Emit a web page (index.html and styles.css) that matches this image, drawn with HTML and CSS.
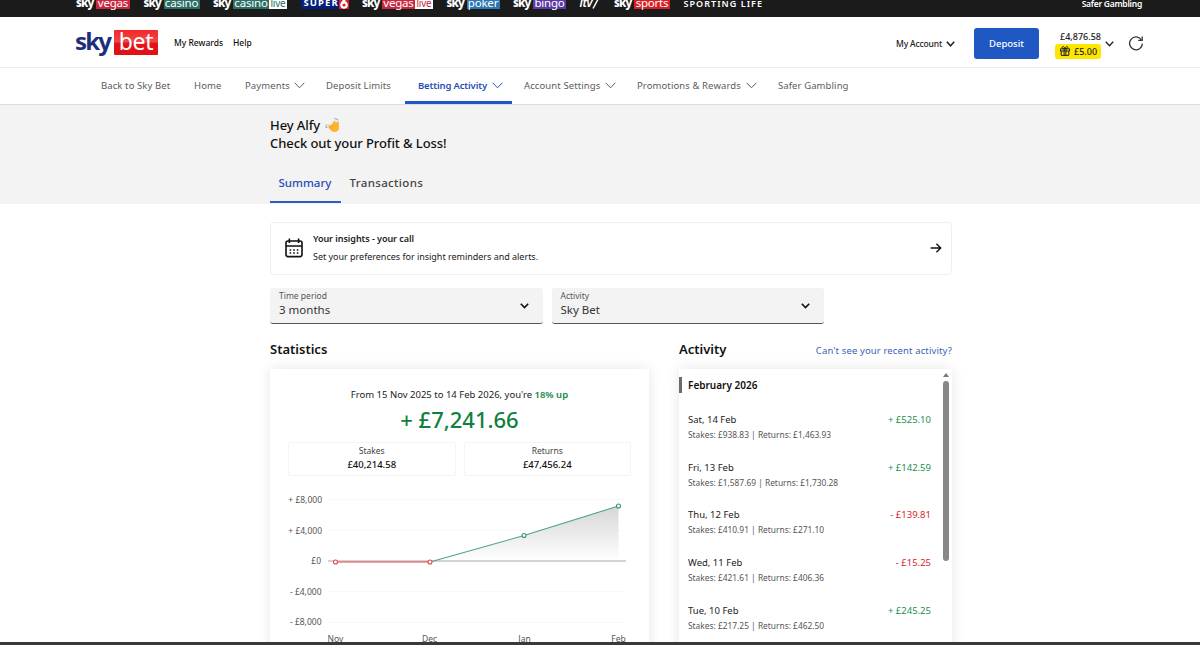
FILE: index.html
```html
<!DOCTYPE html>
<html lang="en">
<head>
  <meta charset="UTF-8">
  <title>Sky Bet - Profit &amp; Loss</title>
  <link rel="stylesheet" href="styles.css">
</head>
<body>

<!-- Product bar -->
<div class="topbar">
  <div class="products">
    <a class="brand w-vegas"><b>sky</b><span class="tag vegas">vegas</span></a>
    <a class="brand w-casino"><b>sky</b><span class="tag casino">casino</span></a>
    <a class="brand w-casino-live"><b>sky</b><span class="tag casino">casino</span><span class="tag live live-green">live</span></a>
    <a class="brand w-super"><span class="super">SUPER</span><span class="six"><svg width="10" height="15" viewBox="0 0 10 15"><path d="M6.4 4.5 L3 9.5" stroke="#fff" stroke-width="2.6"/><circle cx="5" cy="11" r="2.7" fill="none" stroke="#fff" stroke-width="2.2"/></svg></span></a>
    <a class="brand w-vegas-live"><b>sky</b><span class="tag vegas">vegas</span><span class="tag live live-red">live</span></a>
    <a class="brand w-poker"><b>sky</b><span class="tag poker">poker</span></a>
    <a class="brand w-bingo"><b>sky</b><span class="tag bingo">bingo</span></a>
    <a class="brand w-itv"><i>itv</i><svg width="7" height="15" viewBox="0 0 7 15"><path d="M6.2 5 L1 14.5" fill="none" stroke="#fff" stroke-width="1.5"/></svg></a>
    <a class="brand w-sports"><b>sky</b><span class="tag sports">sports</span></a>
    <a class="brand sporting">SPORTING LIFE</a>
  </div>
  <a class="safer">Safer Gambling</a>
</div>

<header>
  <a class="logo"><b>sky</b><span>bet</span></a>
  <a class="head-link rewards">My Rewards</a>
  <a class="head-link">Help</a>
  <div class="account">
    <a class="my-account">My Account</a>
    <svg class="acc-chevron" width="9" height="6" viewBox="0 0 9 6"><path d="M.8 .8 L4.5 4.8 L8.2 .8" fill="none" stroke="#222" stroke-width="1.5"/></svg>
    <button class="deposit">Deposit</button>
    <div class="balance">
      <span class="cash">£4,876.58</span>
      <span class="bonus">
        <svg width="10" height="10" viewBox="0 0 10 10" fill="none" stroke="#222" stroke-width="1"><path d="M.5 2.8 H9.5 V5 H.5 Z M1.2 5 V9.4 H8.8 V5 M4.1 2.8 V9.4 M5.9 2.8 V9.4 M5 2.6 C4.4 .2 2 0 2.2 1.7 C2.3 2.5 3.4 2.7 5 2.7 C6.6 2.7 7.7 2.5 7.8 1.7 C8 0 5.6 .2 5 2.6"/></svg>
        £5.00
      </span>
    </div>
    <svg class="bal-chevron" width="9" height="6" viewBox="0 0 9 6"><path d="M.8 .8 L4.5 4.8 L8.2 .8" fill="none" stroke="#222" stroke-width="1.3"/></svg>
    <svg class="refresh" width="16" height="16" viewBox="0 0 16 16" fill="none" stroke="#333" stroke-width="1.3"><path d="M13.4 4.9 A6.4 6.4 0 1 0 14.4 8.6"/><path d="M14.2 1.4 V5.4 H10.2"/></svg>
  </div>
</header>

<nav>
  <a class="n-back">Back to Sky Bet</a>
  <a class="n-home">Home</a>
  <a class="n-pay">Payments <svg width="11" height="7" viewBox="0 0 11 7"><path d="M.7 .8 L5.5 5.8 L10.3 .8"/></svg></a>
  <a class="n-limits">Deposit Limits</a>
  <a class="n-activity active">Betting Activity <svg width="11" height="7" viewBox="0 0 11 7"><path d="M.7 .8 L5.5 5.8 L10.3 .8"/></svg></a>
  <a class="n-settings">Account Settings <svg width="11" height="7" viewBox="0 0 11 7"><path d="M.7 .8 L5.5 5.8 L10.3 .8"/></svg></a>
  <a class="n-promo">Promotions &amp; Rewards <svg width="11" height="7" viewBox="0 0 11 7"><path d="M.7 .8 L5.5 5.8 L10.3 .8"/></svg></a>
  <a class="n-safer">Safer Gambling</a>
</nav>

<section class="hero">
  <div class="container">
    <h1>Hey Alfy <svg width="15" height="15" viewBox="0 0 15 15"><path d="M6.6 6.4 L8.6 3.4 C9.8 2.2 10.8 3 10.6 4.2 L10.4 5 L12.4 3.6 C13.6 3 14 4 13.8 5 L14 9.6 C14 12.4 12.4 14.2 9.4 14 C7.6 13.9 6.3 12.8 4.6 11 L3.4 9.7 C3 8.8 3.8 8.3 4.6 8.8 L3.3 7.5 C3.2 6.6 4 6.3 4.8 6.9 L5.6 7.6 Z" fill="#fbb62f"/><path d="M5 8.8 L7.6 10.8 M6 7.5 L8.6 9.6" stroke="#f09a28" stroke-width=".7"/><path d="M9.4 .9 C11.2 .6 12.6 1 13.2 2.4 M.2 8.4 C1 9.2 1.5 9.4 2.4 9.6 M1 6.6 L2.2 7.6" fill="none" stroke="#6fb0dc" stroke-width="1.1"/></svg><br>Check out your Profit &amp; Loss!</h1>
    <div class="tabs">
      <a class="tab selected">Summary</a>
      <a class="tab">Transactions</a>
    </div>
  </div>
</section>

<main class="container">
  <div class="insights">
    <svg width="18" height="20" viewBox="0 0 18 20" fill="none" stroke="#111" stroke-width="1.6"><rect x="1" y="3" width="16" height="15.6" rx="2"/><path d="M1 8 H17 M4.4 .6 V5 M13.6 .6 V5"/><path d="M4.6 12 H6.2 M8.2 12 H9.8 M11.8 12 H13.4 M4.6 15 H6.2 M8.2 15 H9.8 M11.8 15 H13.4" stroke-width="1.5"/></svg>
    <div class="insights-text">
      <strong>Your insights - your call</strong>
      <p>Set your preferences for insight reminders and alerts.</p>
    </div>
    <svg width="12" height="10" viewBox="0 0 12 10" fill="none" stroke="#111" stroke-width="1.4"><path d="M.6 5 H10.6 M6.4 .8 L10.7 5 L6.4 9.2"/></svg>
  </div>

  <div class="filters">
    <div class="select">
      <div><label>Time period</label><span class="value">3 months</span></div>
      <svg width="9" height="6" viewBox="0 0 9 6"><path d="M.8 .8 L4.5 4.5 L8.2 .8"/></svg>
    </div>
    <div class="select">
      <div><label>Activity</label><span class="value">Sky Bet</span></div>
      <svg width="9" height="6" viewBox="0 0 9 6"><path d="M.8 .8 L4.5 4.5 L8.2 .8"/></svg>
    </div>
  </div>

  <div class="columns">
    <section class="stats">
      <h2>Statistics</h2>
      <div class="card stats-card">
        <p class="period">From 15 Nov 2025 to 14 Feb 2026, you're <b>18% up</b></p>
        <p class="total">+ £7,241.66</p>
        <div class="boxes">
          <div class="box"><span>Stakes</span><b>£40,214.58</b></div>
          <div class="box"><span>Returns</span><b>£47,456.24</b></div>
        </div>
        <svg class="chart" width="343" height="160" viewBox="0 0 343 160">
          <defs>
            <linearGradient id="fade" x1="0" y1="0" x2="0" y2="1">
              <stop offset="0" stop-color="#d6d6d6"/>
              <stop offset="1" stop-color="#fff"/>
            </linearGradient>
          </defs>
          <g stroke="#f9f9f9">
            <path d="M40 15.5 H338 M40 46.5 H338 M40 107.5 H338 M40 138.5 H338"/>
          </g>
          <path d="M142 77 L236 51.5 L330.5 22 V77 Z" fill="url(#fade)"/>
          <path d="M40 77 H338" stroke="#c4c4c4" stroke-width="1.4"/>
          <path d="M142 78 L236 51.5 L330.5 22" fill="none" stroke="#4aa77c" stroke-width="1.1"/>
          <path d="M47.5 78 H142" stroke="#e5474a" stroke-width="1.2"/>
          <g fill="#fff" stroke-width="1.1">
            <circle cx="47.5" cy="78" r="2" stroke="#e5474a"/>
            <circle cx="142" cy="78" r="2" stroke="#e5474a"/>
            <circle cx="236" cy="51.5" r="2" stroke="#2f9a68"/>
            <circle cx="330.5" cy="22" r="2" stroke="#2f9a68"/>
          </g>
          <g class="axis" text-anchor="end">
            <text x="34" y="18.7">+ £8,000</text>
            <text x="34" y="49.5">+ £4,000</text>
            <text x="33" y="80">£0</text>
            <text x="33.5" y="110.7">- £4,000</text>
            <text x="33.5" y="141.2">- £8,000</text>
          </g>
          <g class="axis" text-anchor="middle">
            <text x="47.5" y="157.5">Nov</text>
            <text x="141.5" y="157.5">Dec</text>
            <text x="236.5" y="157.5">Jan</text>
            <text x="330.5" y="157.5">Feb</text>
          </g>
        </svg>
      </div>
    </section>

    <section class="activity">
      <div class="activity-head">
        <h2>Activity</h2>
        <a>Can't see your recent activity?</a>
      </div>
      <div class="card activity-card">
        <div class="list">
          <h3>February 2026</h3>
          <div class="day"><div class="row"><span>Sat, 14 Feb</span><span class="win">+ £525.10</span></div><p>Stakes: £938.83 | Returns: £1,463.93</p></div>
          <div class="day"><div class="row"><span>Fri, 13 Feb</span><span class="win">+ £142.59</span></div><p>Stakes: £1,587.69 | Returns: £1,730.28</p></div>
          <div class="day"><div class="row"><span>Thu, 12 Feb</span><span class="loss">- £139.81</span></div><p>Stakes: £410.91 | Returns: £271.10</p></div>
          <div class="day"><div class="row"><span>Wed, 11 Feb</span><span class="loss">- £15.25</span></div><p>Stakes: £421.61 | Returns: £406.36</p></div>
          <div class="day"><div class="row"><span>Tue, 10 Feb</span><span class="win">+ £245.25</span></div><p>Stakes: £217.25 | Returns: £462.50</p></div>
        </div>
        <div class="scroll">
          <div class="arrow"></div>
          <div class="thumb"></div>
        </div>
      </div>
    </section>
  </div>
</main>

<footer></footer>

</body>
</html>
```
FILE: styles.css
```css
* {
  box-sizing: border-box;
}

body {
  margin: 0;
  height: 645px;
  overflow: hidden;
  display: flex;
  flex-direction: column;
  font-family: 'Noto Sans', sans-serif;
  font-size: 10px;
  color: #222;
  background: #fff;
}

h1, h2, h3, p {
  margin: 0;
}

svg {
  flex: none;
}

/* Product bar */
.topbar {
  height: 17px;
  flex: none;
  overflow: hidden;
  background: #1b1b1b;
  color: #fff;
  display: flex;
  justify-content: space-between;
  align-items: flex-end;
  padding: 0 58px 8px 76px;
}

.products {
  display: flex;
  gap: 13.5px;
  align-items: flex-end;
}

.brand {
  display: flex;
  align-items: flex-end;
  height: 15px;
  font-size: 11.5px;
  line-height: 18px;
  white-space: nowrap;
}

.brand b {
  width: 20px;
  height: 15px;
  font-weight: 800;
  letter-spacing: -0.8px;
}

.brand i {
  height: 15px;
  font-size: 12px;
  font-weight: 600;
  letter-spacing: -0.5px;
}

.tag {
  flex: 1;
  height: 15px;
  text-align: center;
  letter-spacing: -0.2px;
}

.w-vegas { width: 54px; }
.w-casino { width: 56px; }
.w-casino-live { width: 74px; }
.w-super { width: 48px; }
.w-vegas-live { width: 71px; }
.w-poker { width: 53px; }
.w-bingo { width: 53px; }
.w-itv { width: 21px; }
.w-sports { width: 56px; }

.vegas { background: #c9283f; }
.casino { background: #2c6f66; }
.poker { background: #2d76b5; }
.bingo { background: #5c3aa5; }
.sports { background: #d81f26; }

.live {
  flex: none;
  width: 18px;
  background: #fff;
  font-size: 10px;
}

.live-green { color: #2c6f66; }
.live-red { color: #c9283f; }

.super {
  width: 38px;
  height: 15px;
  padding-left: 3px;
  background: #04207c;
  font-size: 9.5px;
  font-weight: 700;
  letter-spacing: 1.1px;
}

.six {
  width: 10px;
  height: 15px;
  background: #e01b22;
}

.sporting {
  align-items: flex-start;
  font-size: 9px;
  line-height: 19px;
  font-weight: 600;
  letter-spacing: 1.05px;
}

.safer {
  height: 12px;
  font-weight: 600;
  font-size: 8.5px;
  line-height: 13px;
  letter-spacing: -0.25px;
}

/* Header */
header {
  height: 51px;
  flex: none;
  display: flex;
  align-items: center;
  padding: 0 56px 0 75px;
  border-bottom: 1px solid #ededed;
}

.logo {
  display: flex;
  align-items: center;
  margin-right: 16px;
}

.logo b {
  width: 39px;
  height: 32px;
  font-size: 24px;
  line-height: 30px;
  letter-spacing: -1.8px;
  font-weight: 700;
  color: #1c2f7c;
}

.logo span {
  width: 44px;
  height: 25px;
  background: linear-gradient(#f5262c 0%, #ee4a45 48%, #e3141a 52%, #dd1117 100%);
  border-radius: 1px;
  color: #fff;
  text-align: center;
  font-size: 23px;
  line-height: 22px;
  letter-spacing: -0.3px;
}

.head-link {
  font-size: 8.5px;
  font-weight: 500;
  color: #111;
}

.rewards {
  width: 59px;
}

.account {
  margin-left: auto;
  display: flex;
  align-items: center;
}

.my-account {
  width: 50px;
  padding-top: 2px;
  font-size: 8.5px;
  font-weight: 500;
  letter-spacing: -0.15px;
  white-space: nowrap;
}

.acc-chevron {
  margin: 4px 19px 0 0;
}

.deposit {
  width: 65px;
  height: 31px;
  margin: 2px 15px 0 0;
  border: none;
  border-radius: 3px;
  background: #1f57c3;
  color: #fff;
  font: 500 9.5px 'Noto Sans', sans-serif;
}

.balance {
  display: flex;
  flex-direction: column;
  align-items: flex-end;
  width: 47px;
  padding-top: 4px;
}

.cash {
  font-size: 9px;
  font-weight: 500;
  line-height: 14px;
}

.bonus {
  display: flex;
  align-items: center;
  gap: 4px;
  width: 46px;
  height: 15px;
  padding-left: 5px;
  border-radius: 3px;
  background: #ffe600;
  font-size: 9px;
  font-weight: 500;
}

.bal-chevron {
  margin: 3px 0 0 4px;
}

.refresh {
  margin: 2px 0 0 14px;
}

/* Account navigation */
nav {
  height: 37px;
  flex: none;
  display: flex;
  padding-left: 89px;
  border-bottom: 1px solid #dcdcdc;
}

nav a {
  display: flex;
  align-items: center;
  justify-content: space-between;
  padding: 0 9px 1px 12px;
  font-size: 9.5px;
  color: #5c5c5c;
  letter-spacing: 0.1px;
  white-space: nowrap;
}

nav svg path {
  fill: none;
  stroke: currentColor;
  stroke-width: 1;
}

.n-back { width: 93px; }
.n-home { width: 51px; }
.n-pay { width: 81px; }
.n-limits { width: 91px; }
.n-activity { width: 107px; }
.n-settings { width: 113px; }
.n-promo { width: 141px; }

nav .active {
  color: #1f4fb5;
  font-weight: 600;
  letter-spacing: -0.15px;
  padding: 1px 9px 0 13px;
  border-bottom: 3px solid #1f57c3;
}

/* Greeting and tabs */
.hero {
  height: 99px;
  flex: none;
  background: #f3f3f3;
}

.container {
  width: 682px;
  margin-left: 270px;
}

h1 {
  padding-top: 11px;
  font-size: 13px;
  line-height: 18px;
  font-weight: 500;
  letter-spacing: -0.08px;
  color: #111;
}

h1 svg {
  margin-left: 2px;
  vertical-align: -3px;
}

.tabs {
  display: flex;
  margin-top: 14px;
}

.tab {
  height: 37px;
  padding: 0 8.5px;
  font-size: 11.5px;
  line-height: 33px;
  font-weight: 500;
  letter-spacing: 0.35px;
  color: #444;
}

.selected {
  width: 71px;
  letter-spacing: 0;
  color: #1f4fb5;
  border-bottom: 2px solid #2a5fc0;
}

/* Insights banner */
.insights {
  display: flex;
  align-items: center;
  height: 53px;
  margin-top: 18px;
  padding: 0 9px 1px 14px;
  border: 1px solid #efefef;
  border-radius: 4px;
}

.insights-text {
  flex: 1;
  padding-left: 10px;
  line-height: 18px;
}

.insights-text strong {
  display: block;
  font-size: 9px;
  font-weight: 600;
  letter-spacing: -0.05px;
}

.insights-text p {
  font-size: 9px;
  letter-spacing: -0.02px;
}

/* Filters */
.filters {
  display: flex;
  gap: 9px;
  margin-top: 13px;
}

.select {
  display: flex;
  justify-content: space-between;
  align-items: center;
  width: 272.5px;
  height: 36px;
  padding: 0 14px 0 9px;
  background: #f3f3f3;
  border-bottom: 1px solid #555;
  border-radius: 3px;
}

.select label {
  display: block;
  font-size: 8.5px;
  line-height: 13px;
  color: #555;
}

.value {
  display: block;
  height: 21px;
  font-size: 11.5px;
  line-height: 16px;
  color: #333;
}

.select svg path {
  fill: none;
  stroke: #111;
  stroke-width: 1.6;
}

/* Statistics and activity */
.columns {
  display: flex;
  gap: 30px;
  margin-top: 14px;
}

.stats {
  width: 379px;
}

.activity {
  width: 273px;
}

h2 {
  height: 31px;
  font-size: 13px;
  line-height: 23px;
  font-weight: 600;
  color: #111;
}

.card {
  height: 300px;
  background: #fff;
  box-shadow: 0 0 12px rgba(0, 0, 0, 0.1);
}

.stats-card {
  padding: 17px 18px 0;
  text-align: center;
}

.period {
  font-size: 9.5px;
  line-height: 17px;
}

.period b {
  font-weight: 600;
  color: #0f8a3f;
}

.total {
  font-size: 22px;
  line-height: 32px;
  font-weight: 500;
  color: #0f8040;
}

.boxes {
  display: flex;
  gap: 8px;
  margin-top: 7px;
}

.box {
  flex: 1;
  height: 34px;
  border: 1px solid #f4f4f4;
  border-radius: 2px;
}

.box span {
  display: block;
  font-size: 8.5px;
  line-height: 15px;
  color: #444;
}

.box b {
  display: block;
  font-size: 9.5px;
  line-height: 14px;
  font-weight: 500;
  color: #111;
}

.chart {
  display: block;
  margin-top: 8px;
}

.axis {
  font-size: 8.5px;
  fill: #555;
}

.activity-head {
  display: flex;
  justify-content: space-between;
}

.activity-head a {
  font-size: 9.5px;
  line-height: 25px;
  letter-spacing: 0.13px;
  color: #3a62b5;
}

.activity-card {
  display: flex;
}

.list {
  flex: 1;
  padding: 8px 9px 0 0;
}

h3 {
  height: 16px;
  padding-left: 6px;
  border-left: 3px solid #6b6b6b;
  font-size: 10px;
  line-height: 16px;
  font-weight: 600;
  color: #111;
}

.day {
  height: 47.7px;
  padding-left: 9px;
}

h3 + .day {
  margin-top: 18px;
}

.row {
  display: flex;
  justify-content: space-between;
  font-size: 9.5px;
  line-height: 17px;
}

.day p {
  font-size: 8.4px;
  line-height: 13px;
  color: #555;
}

.win {
  color: #1b8f4b;
}

.loss {
  color: #d9252b;
}

.scroll {
  width: 12px;
  padding: 4px 3px 0;
}

.arrow {
  width: 6px;
  height: 4px;
  border-left: 3px solid transparent;
  border-right: 3px solid transparent;
  border-bottom: 4px solid #777;
}

.thumb {
  width: 6px;
  height: 180px;
  margin-top: 4px;
  border-radius: 3px;
  background: #888;
}

main {
  flex: 1;
  min-height: 0;
}

/* Bottom strip */
footer {
  height: 3px;
  flex: none;
  position: relative;
  background: #3a3838;
}
```
